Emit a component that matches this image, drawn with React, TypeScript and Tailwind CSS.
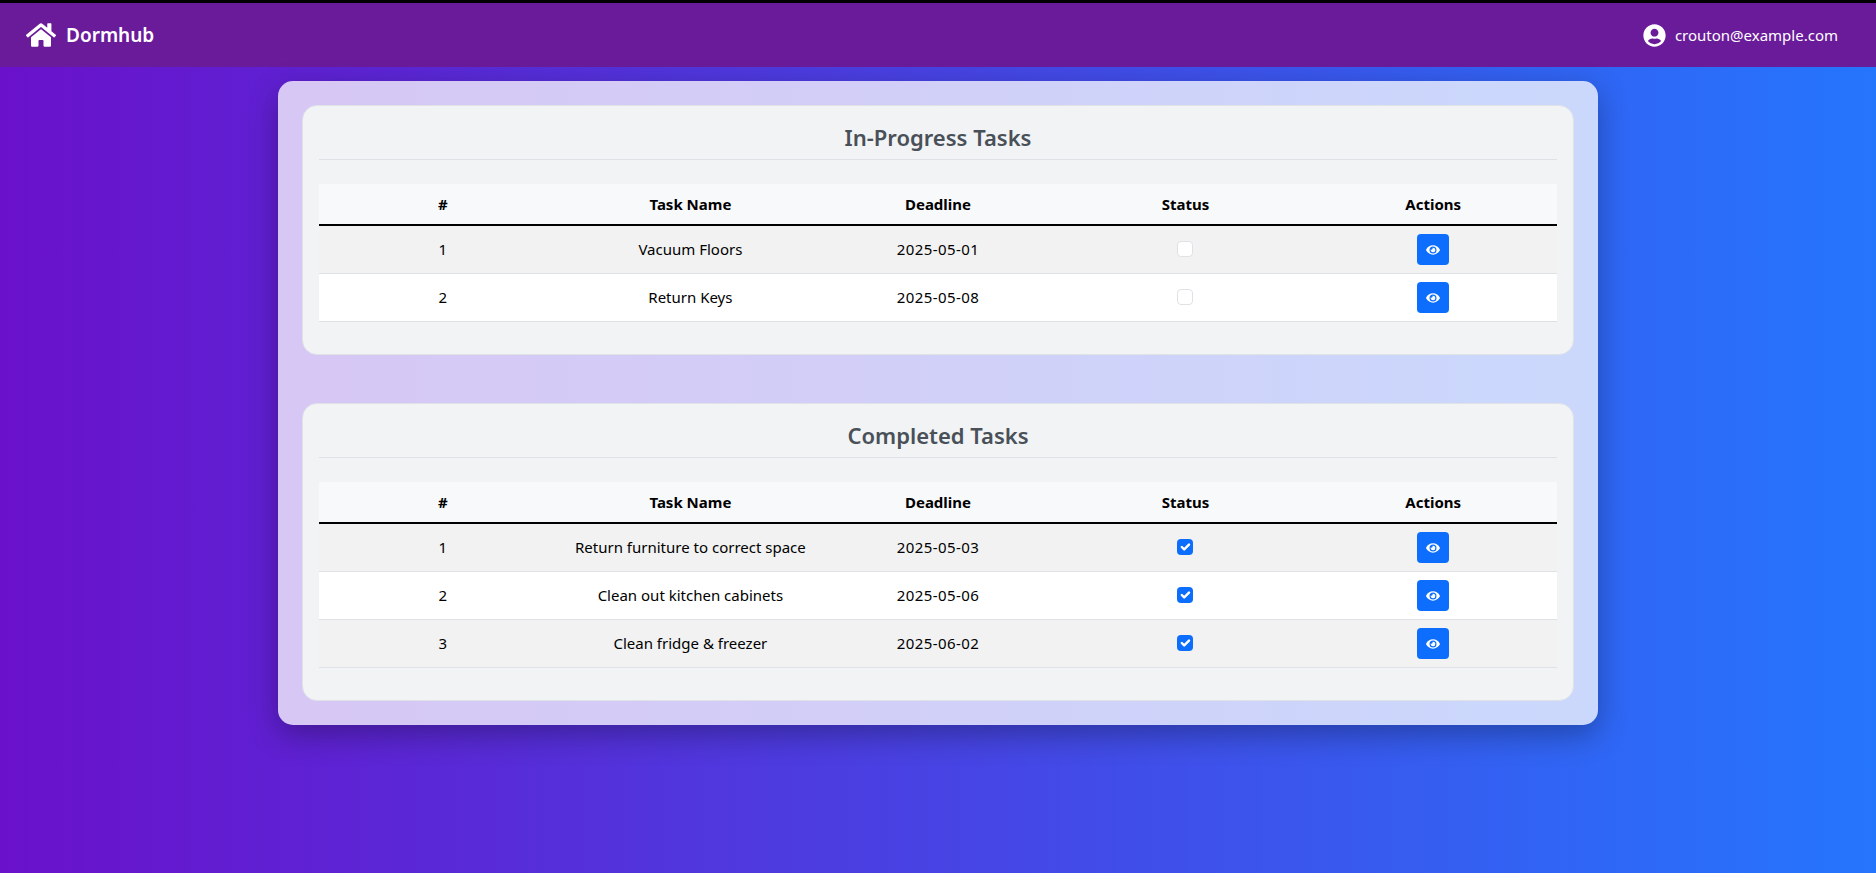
import React from "react";
import { FaHome, FaUserCircle, FaEye } from "react-icons/fa";

interface Task {
  name: string;
  deadline: string;
}

const inProgress: Task[] = [
  { name: "Vacuum Floors", deadline: "2025-05-01" },
  { name: "Return Keys", deadline: "2025-05-08" },
];

const completed: Task[] = [
  { name: "Return furniture to correct space", deadline: "2025-05-03" },
  { name: "Clean out kitchen cabinets", deadline: "2025-05-06" },
  { name: "Clean fridge & freezer", deadline: "2025-06-02" },
];

function StatusBox({ checked }: { checked: boolean }) {
  if (checked) {
    return (
      <span className="block ml-[calc(50%-9px)] w-4 h-4 rounded-[4px] bg-[#0d6efd]">
        <svg viewBox="0 0 20 20" className="w-4 h-4" fill="none">
          <path d="M6 10l3 3l6-6" stroke="#fff" strokeWidth="3" strokeLinecap="round" strokeLinejoin="round" />
        </svg>
      </span>
    );
  }
  return <span className="block ml-[calc(50%-9px)] w-4 h-4 rounded-[4px] bg-white border border-[#dee2e6]" />;
}

function TaskCard({ title, tasks, done }: { title: string; tasks: Task[]; done: boolean }) {
  return (
    <section className="bg-[#f1f3f5] border border-[#dfe3e8] rounded-[15px] px-4 pt-[15px] pb-[32.5px]">
      <h2 className="text-[22px] leading-[32px] font-semibold text-[#495057] text-center pb-[6px] border-b border-[#dee2e6]">
        {title}
      </h2>
      <table className="w-full table-fixed mt-6 border-collapse text-[15px] text-black">
        <thead>
          <tr className="h-[41px] bg-[#f8f9fa] border-b-2 border-black">
            <th className="font-bold">#</th>
            <th className="font-bold">Task Name</th>
            <th className="font-bold">Deadline</th>
            <th className="font-bold">Status</th>
            <th className="font-bold">Actions</th>
          </tr>
        </thead>
        <tbody>
          {tasks.map((t, i) => (
            <tr key={t.name} className={`h-[48px] border-b border-[#dee2e6] ${i % 2 === 0 ? "bg-[#f2f2f2]" : "bg-white"}`}>
              <td className="text-center">{i + 1}</td>
              <td className="text-center">{t.name}</td>
              <td className="text-center tracking-[0.4px]">{t.deadline}</td>
              <td className="text-center">
                <StatusBox checked={done} />
              </td>
              <td className="text-center">
                <button className="inline-flex items-center justify-center w-8 h-[31px] rounded-[4px] bg-[#0d6efd] text-white align-middle">
                  <FaEye className="w-[14px] h-[14px] translate-y-[1px]" />
                </button>
              </td>
            </tr>
          ))}
        </tbody>
      </table>
    </section>
  );
}

export default function App() {
  return (
    <div className="min-h-[873px] bg-linear-to-r/srgb from-[#6a11cb] to-[#2575fc] font-['Noto_Sans',sans-serif]">
      <nav className="h-[67px] border-t-[3px] border-black bg-[#6a1b9a] flex items-center justify-between pl-[26px] pr-[38px] text-white">
        <div className="flex items-center gap-[10px]">
          <FaHome className="w-[30px] h-[30px]" />
          <span className="text-[19px] font-semibold">Dormhub</span>
        </div>
        <div className="flex items-center gap-[9px]">
          <FaUserCircle className="w-[23px] h-[23px]" />
          <span className="text-[15px]">crouton@example.com</span>
        </div>
      </nav>
      <main className="w-[1320px] mx-auto mt-[14px] p-6 rounded-[15px] bg-white/75 shadow-[0_10px_30px_rgba(0,0,0,0.3)] flex flex-col gap-12">
        <TaskCard title="In-Progress Tasks" tasks={inProgress} done={false} />
        <TaskCard title="Completed Tasks" tasks={completed} done={true} />
      </main>
    </div>
  );
}
